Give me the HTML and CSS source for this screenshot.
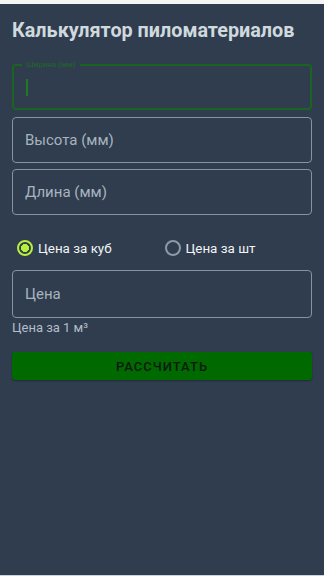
FILE: index.html
```html
<!DOCTYPE html>
<html>
<head>
  <meta charset="UTF-8">
  <title>Калькулятор пиломатериалов</title>
  <meta name="viewport" content="width=device-width, initial-scale=1">
  <link rel="stylesheet" href="styles.css">
</head>
<body>
  <div class="screen">
    <h1 class="title">Калькулятор пиломатериалов</h1>

    <!-- ширина (в фокусе) -->
    <div class="field field-focus">
      <span class="float-label">Ширина (мм)</span>
      <span class="caret"></span>
    </div>

    <div class="field">
      <span class="placeholder">Высота (мм)</span>
    </div>

    <div class="field">
      <span class="placeholder">Длина (мм)</span>
    </div>

    <!-- выбор цены -->
    <div class="radio-row">
      <label class="radio radio-on"><span class="dot"></span>Цена за куб</label>
      <label class="radio"><span class="dot"></span>Цена за шт</label>
    </div>

    <div class="field field-price">
      <span class="placeholder">Цена</span>
    </div>
    <div class="helper">Цена за 1 м³</div>

    <button class="calc">РАССЧИТАТЬ</button>
  </div>
</body>
</html>
```

FILE: styles.css
```css
html, body {
  margin: 0;
  height: 100%;
}
body {
  background: #2f3d4f;
  font-family: Roboto, "Noto Sans", sans-serif;
  border-top: 4px solid #f4f4f4;
  box-sizing: border-box;
  border-bottom: 1px solid #c9d3d9;
}
.screen {
  padding: 14px 12px 0 12px;
  display: flex;
  flex-direction: column;
}
.title {
  margin: 0 0 20px 0;
  font-size: 19.8px;
  font-weight: bold;
  color: #d0d9de;
  line-height: 26px;
  white-space: nowrap;
}
.field {
  height: 44px;
  border: 1px solid #8594a3;
  border-radius: 4px;
  display: flex;
  align-items: center;
  padding: 0 12px;
  margin-bottom: 6px;
  position: relative;
}
.field-focus {
  border: 2px solid #1b6320;
  height: 42px;
  padding: 0 12px;
  margin-bottom: 7px;
}
.float-label {
  position: absolute;
  top: -6px;
  left: 8px;
  padding: 0 4px;
  font-size: 8px;
  line-height: 10px;
  color: #1f6a25;
  background: #2f3d4f;
}
.caret {
  width: 2px;
  height: 17px;
  background: #1f7a26;
}
.placeholder {
  font-size: 15px;
  color: #a8b3be;
}
.radio-row {
  display: flex;
  margin: 19px 0 14px 5px;
}
.radio {
  display: flex;
  align-items: center;
  width: 151px;
  font-size: 13.4px;
  color: #f2f4f5;
}
.dot {
  width: 12px;
  height: 12px;
  border: 2px solid #8d9aa6;
  border-radius: 50%;
  margin-right: 5px;
  box-sizing: content-box;
}
.radio-on .dot {
  border-color: #b8ef3c;
  background: radial-gradient(circle, #b8ef3c 0 3.8px, transparent 4.3px);
}
.field-price {
  height: 46px;
  margin-bottom: 2px;
}
.helper {
  font-size: 13px;
  color: #b4bec8;
  line-height: 16px;
}
.calc {
  margin-top: 16px;
  height: 28px;
  border: 0;
  border-radius: 3px;
  background: #006900;
  color: #0c1a0c;
  font-family: Roboto, "Noto Sans", sans-serif;
  font-size: 13px;
  font-weight: 500;
  letter-spacing: 1px;
  box-shadow: 0 1px 2px rgba(0, 0, 0, 0.3);
}
```
